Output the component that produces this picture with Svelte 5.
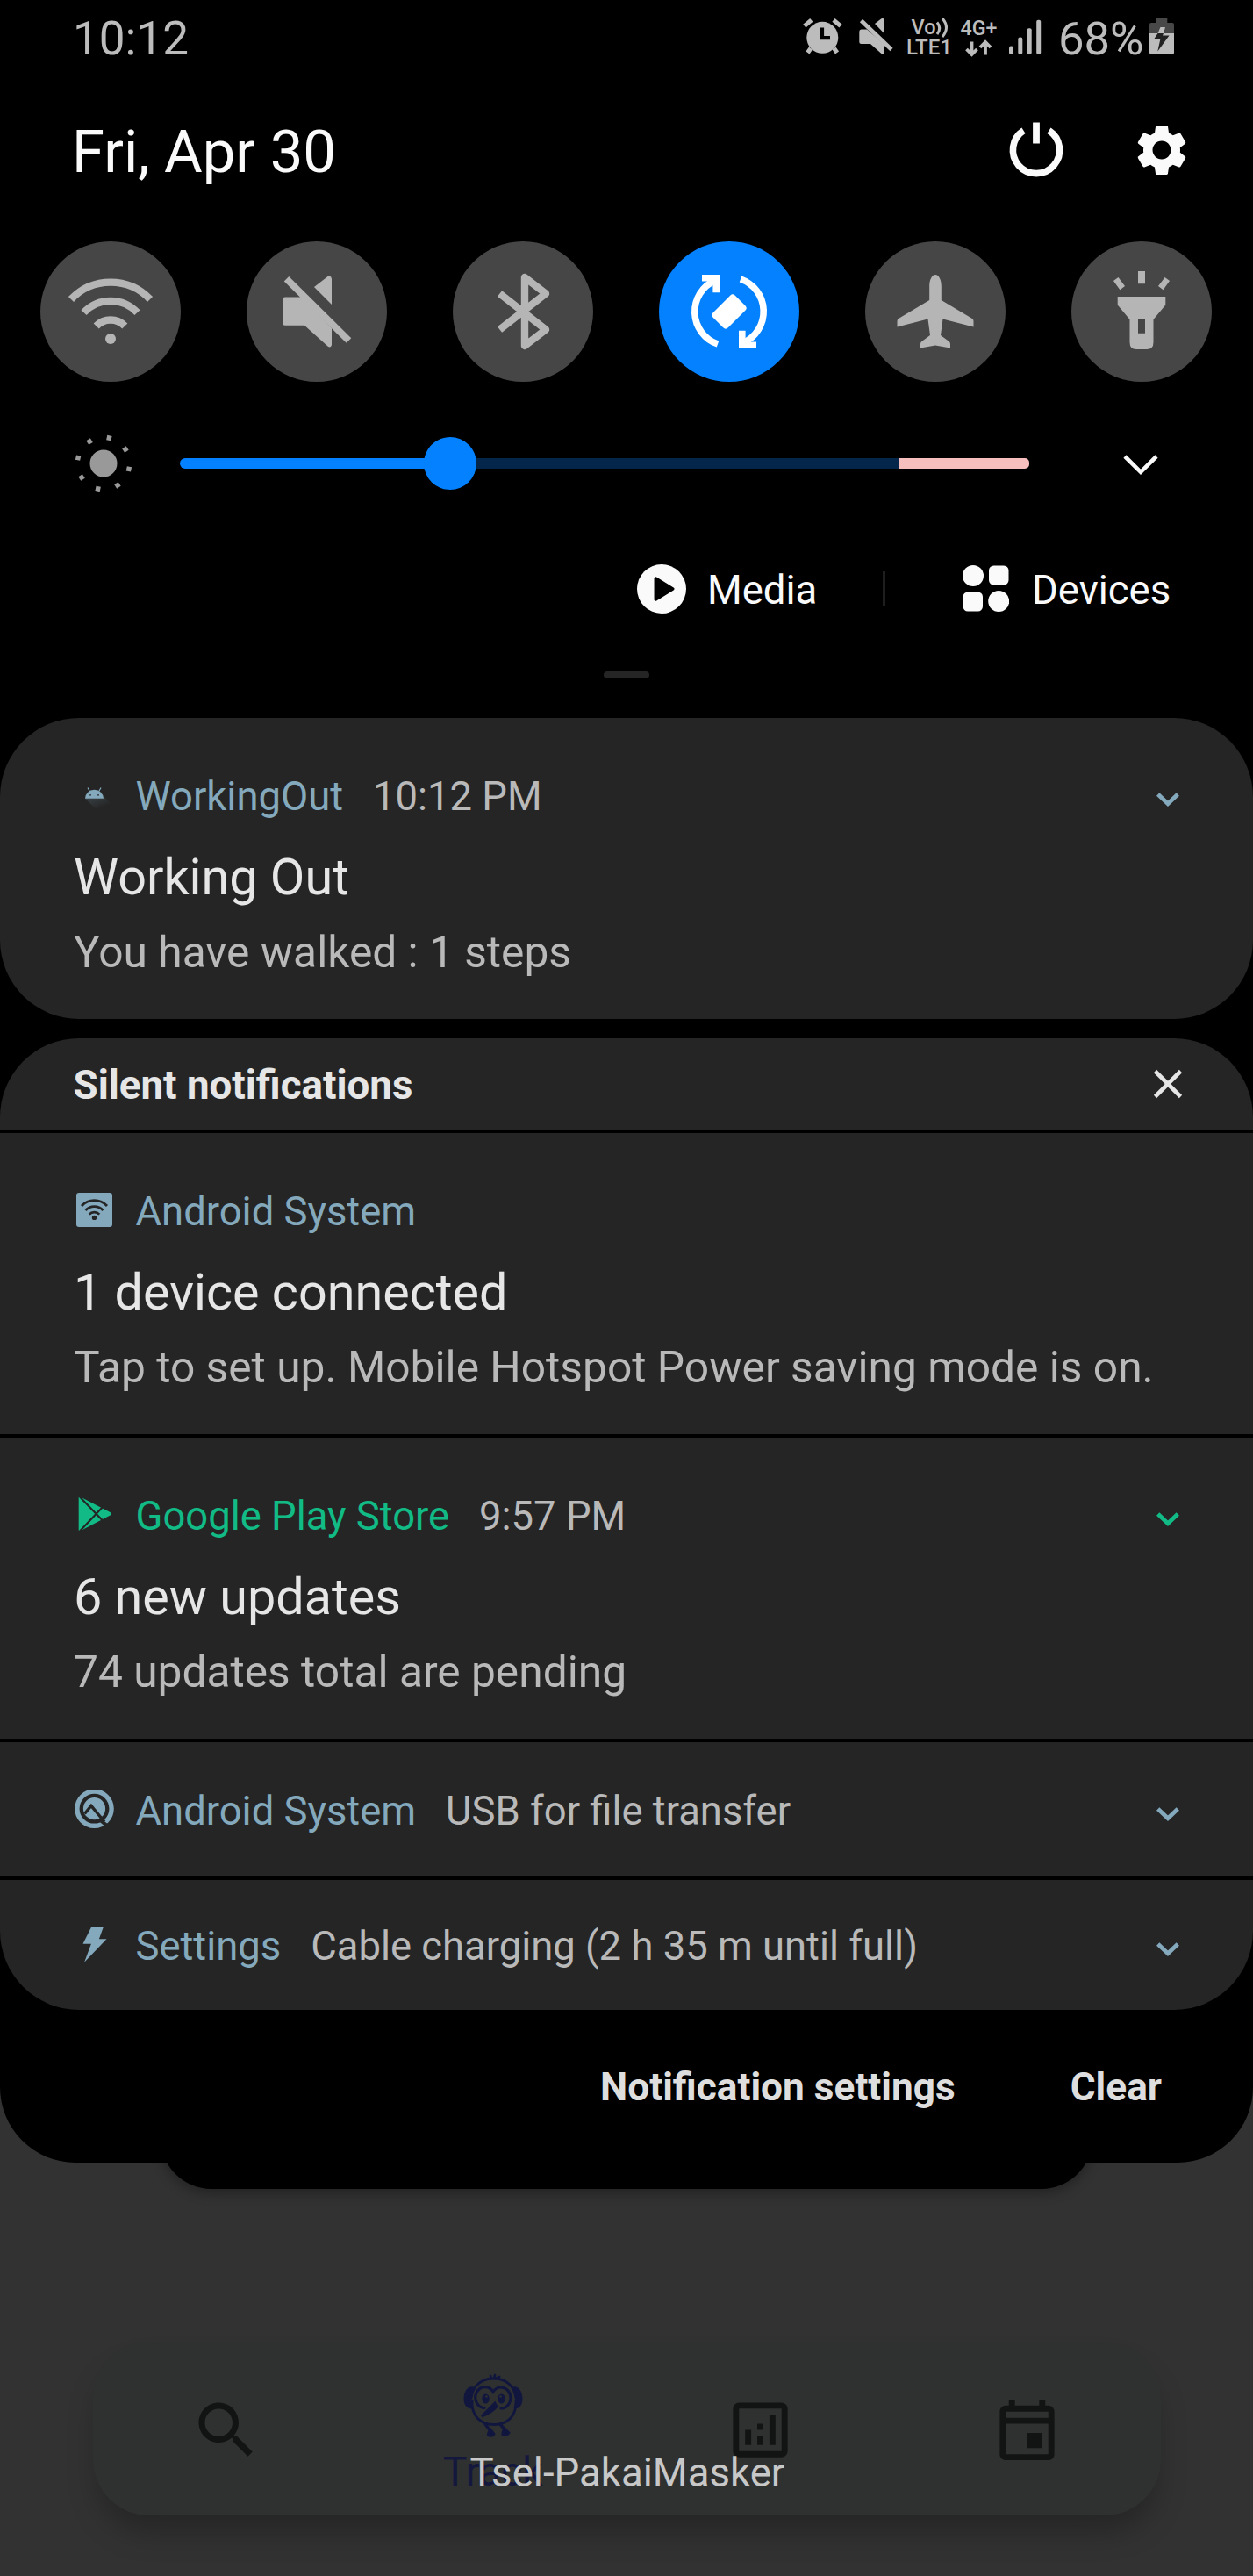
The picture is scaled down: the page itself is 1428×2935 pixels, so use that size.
<script>
  const cards = [
    { app: 'Android System', icon: 'hotspot', title: '1 device connected', body: 'Tap to set up. Mobile Hotspot Power saving mode is on.' },
    { app: 'Google Play Store', icon: 'play', time: '9:57 PM', title: '6 new updates', body: '74 updates total are pending', green: true, expand: true }
  ];
  const tiles = ['wifi', 'mute', 'bluetooth', 'rotate', 'plane', 'torch'];
  const dots = [12.4, 57.4, 102.4, 147.4, 192.4, 237.4, 282.4, 327.4];
</script>

{#snippet chevron()}
  <svg class="chev" width="32" height="32" viewBox="-16 -16 32 32"><path d="M-11.3 -3L0 7.8L11.3 -3" fill="none" stroke="currentColor" stroke-width="4.8" /></svg>
{/snippet}

{#snippet appIcon(name)}
  <svg class="app-icon" width="48" height="48" viewBox="-23.5 -24 48 48">
    {#if name === 'android'}
      <defs>
        <linearGradient id="fade" x1="0" y1="0" x2="0.6" y2="1">
          <stop offset="0" stop-color="#84a9bc" stop-opacity=".25" />
          <stop offset="0.8" stop-color="#84a9bc" stop-opacity="0" />
        </linearGradient>
      </defs>
      <path d="M-10.5 1.8L10.5 -1L18 7V18H6Z" fill="url(#fade)" />
      <path d="M-10.5 1.8A10.5 10 0 0 1 10.5 1.8Z" fill="currentColor" />
      <path d="M-7.5 -10.5L-5 -6M7.5 -10.5L5 -6" stroke="currentColor" stroke-width="1.2" />
      <circle cx="-4.5" cy="-2.2" r="0.9" fill="#252525" /><circle cx="4.5" cy="-2.2" r="0.9" fill="#252525" />
    {:else if name === 'hotspot'}
      <rect x="-20.5" y="-22" width="41" height="39" rx="3" fill="currentColor" />
      <g fill="none" stroke="#252525" stroke-width="2.8">
        <path d="M-14.5 -7A19.5 19.5 0 0 1 14.5 -7" /><path d="M-10 -2A13.5 13.5 0 0 1 10 -2" /><path d="M-5.8 2.6A8 8 0 0 1 5.8 2.6" />
      </g>
      <circle cx="0" cy="6.4" r="2.7" fill="#252525" />
    {:else if name === 'play'}
      <path d="M-17.8 -21.5Q-17.8 -23.2 -15.5 -22.3L18 -5Q21 -3.2 18 -1.5L-15.5 16Q-17.8 17 -17.8 15Z" fill="currentColor" />
      <path d="M-17 -23L10.5 5.5M-17 17L10.5 -12" stroke="#252525" stroke-width="2.2" />
    {:else if name === 'usb'}
      <circle cx="0" cy="-3.3" r="19.6" fill="none" stroke="currentColor" stroke-width="5.4" />
      <circle cx="0" cy="-3.3" r="12.6" fill="currentColor" />
      <path d="M-11 2.5L-3.6 -6.5L11.5 11.5" fill="none" stroke="#252525" stroke-width="3.4" />
      <path d="M7 10L15.5 17" stroke="#252525" stroke-width="4.2" />
    {:else}
      <path d="M-3.6 -22H10.2L5.4 -8.7H14L-11.4 17.8L-3.6 -3.3H-13Z" fill="currentColor" />
    {/if}
  </svg>
{/snippet}

<div class="screen">
  <main class="panel">
    <header class="status">
      <span class="clock">10:12</span>
      <svg class="status-icons" width="290" height="88" viewBox="910 0 290 88">
        <g fill="#bcbcbc" stroke="none">
          <circle cx="937.3" cy="42.8" r="18" />
          <path d="M924 55L920.5 60M950.5 55L954 60" stroke="#bcbcbc" stroke-width="5" />
          <path d="M916.8 29.6L924.8 22.8M958 29.6L950 22.8" stroke="#bcbcbc" stroke-width="5" />
          <path d="M937 31.5V43.2H946" fill="none" stroke="#000" stroke-width="4.2" />
          <path d="M981.5 33.5H988L1007 50V61Q1006.5 62.5 1005 61.5L992 50H981.5Q979.3 50 979.3 48V36Q979.3 33.5 981.5 33.5Z" />
          <path d="M1007 37.5L997 27L1004.5 21.3Q1007 20 1007 22Z" />
          <path d="M981.5 23.5L1016 56.5" stroke="#bcbcbc" stroke-width="4.6" />
          <text class="net" x="1038.500" y="38.500" font-size="23" textLength="28" lengthAdjust="spacingAndGlyphs">Vo</text>
          <path d="M1068 25.500Q1073.500 32 1068 39M1074 21Q1083 31.500 1074 42" fill="none" stroke="#bcbcbc" stroke-width="3" />
          <text class="net" x="1033" y="62" font-size="24.500" textLength="52" lengthAdjust="spacingAndGlyphs">LTE1</text>
          <text class="net" x="1094.500" y="40" font-size="24" textLength="42" lengthAdjust="spacingAndGlyphs">4G+</text>
          <path d="M1107.500 47.500V61M1101.500 56L1107.500 62L1113.500 56M1123 62.500V49M1117 54L1123 48L1129 54" fill="none" stroke="#bcbcbc" stroke-width="3.800" />
          <rect x="1150" y="52.500" width="5" height="9.500" rx="2" /><rect x="1160.300" y="42.500" width="5" height="19.500" rx="2" />
          <rect x="1170.700" y="32.300" width="5" height="29.700" rx="2" /><rect x="1181.200" y="22.700" width="5" height="39.300" rx="2" />
        </g>
      </svg>
      <span class="percent">68%</span>
      <svg class="battery" width="30" height="88" viewBox="1309 0 30 88">
        <path d="M1317.300 20H1330.300V26H1336Q1338 26 1338 28V38H1310V28Q1310 26 1312 26H1317.300Z" fill="#484848" />
        <path d="M1310 38H1338V60Q1338 62 1336 62H1312Q1310 62 1310 60Z" fill="#bcbcbc" />
        <path d="M1322.500 31H1328L1326 38H1319.500Z" fill="#bcbcbc" />
        <path d="M1319.500 38H1326L1325 40.500H1332.500L1319.300 58.500L1322.500 44H1315.500Z" fill="#222" />
      </svg>
    </header>

    <div class="date-row">
      <span class="date">Fri, Apr 30</span>
      <svg class="power" width="72" height="72" viewBox="-36 -36 72 72"><path d="M-14.500 -22.300A26.600 26.600 0 1 0 14.500 -22.300" fill="none" stroke="#fafafa" stroke-width="7.600" /><path d="M0 -31.500V-7.500" stroke="#fafafa" stroke-width="7.800" /></svg>
      <svg width="70" height="70" viewBox="0 0 24 24" fill="#fafafa"><path d="M19.140 12.940c.04-.3.06-.61.06-.94 0-.32-.02-.64-.07-.94l2.030-1.580c.18-.14.23-.41.12-.61l-1.920-3.320c-.12-.22-.37-.29-.59-.22l-2.390.96c-.5-.38-1.030-.7-1.620-.94l-.36-2.540c-.04-.24-.24-.41-.48-.41h-3.840c-.24 0-.43.17-.47.41l-.36 2.540c-.59.24-1.130.57-1.620.94l-2.390-.96c-.22-.08-.47 0-.59.22L2.740 8.870c-.12.21-.08.47.12.61l2.030 1.580c-.05.3-.09.63-.09.94s.02.64.07.94l-2.030 1.580c-.18.14-.23.41-.12.61l1.920 3.320c.12.22.37.29.59.22l2.390-.96c.5.38 1.030.7 1.620.94l.36 2.540c.05.24.24.41.48.41h3.840c.24 0 .44-.17.47-.41l.36-2.540c.59-.24 1.130-.56 1.620-.94l2.390.96c.22.08.47 0 .59-.22l1.920-3.320c.12-.22.07-.47-.12-.61l-2.010-1.580zM12 15.600c-1.980 0-3.600-1.620-3.600-3.600s1.620-3.600 3.600-3.600 3.600 1.620 3.600 3.600-1.620 3.600-3.600 3.600z" /></svg>
    </div>

    <div class="tiles">
      {#each tiles as tile}
        <div class="tile" class:active={tile === 'rotate'}>
          <svg width="100" height="100" viewBox="-50 -50 100 100" fill="#b5b5b5" stroke="none">
            {#if tile === 'wifi'}
              <g fill="none" stroke="#b5b5b5" stroke-width="8.400">
                <path d="M-45 -14A62 62 0 0 1 45 -14" /><path d="M-30.500 1.200A41.500 41.500 0 0 1 30.500 1.200" /><path d="M-16.300 16.500A22.500 22.500 0 0 1 16.300 16.500" />
              </g>
              <circle cx="0" cy="31" r="6" />
            {:else if tile === 'mute'}
              <path d="M-36 -16.500H-17L17 19V38Q16 42 12.500 39.500L-14 15.700H-36Q-39 15.700 -39 12.500V-13.500Q-39 -16.500 -36 -16.500Z" />
              <path d="M17 -8L-3 -28L12.500 -40Q16.500 -41.500 17 -37Z" />
              <path d="M-34.500 -37.300L36.500 33" stroke="#b5b5b5" stroke-width="7.800" />
            {:else if tile === 'bluetooth'}
              <path d="M-26.500 -20.500L26 20.500L2 39V-39L26 -20.500L-26.500 20.500" fill="none" stroke="#b5b5b5" stroke-width="8.400" stroke-linejoin="round" />
            {:else if tile === 'rotate'}
              <g fill="none" stroke="#fff" stroke-width="7.600">
                <path d="M-13 37A39 39 0 0 1 -16 -35.500" /><path d="M-31 -38.200H-14.800V-21.700" />
                <path d="M13 -37A39 39 0 0 1 16 35.500" /><path d="M31 38.200H14.800V21.700" />
              </g>
              <path d="M4 -15.500L15.500 -4L-4 15.500L-15.500 4Z" fill="#fff" stroke="#fff" stroke-width="8" stroke-linejoin="round" />
            {:else if tile === 'plane'}
              <path d="M0 -42C4 -42 6.800 -36 6.800 -29V-13L42 8Q43.500 9 43.500 11V17.500L8.500 8.500L6 27L15.500 34Q17 35 17 37V41.500L0 38.500L-17 41.500V37Q-17 35 -15.500 34L-6 27L-8.500 8.500L-43.500 17.500V11Q-43.500 9 -42 8L-6.800 -13V-29C-6.800 -36 -4 -42 0 -42Z" />
            {:else}
              <path fill-rule="evenodd" d="M-27.300 -17H27.300V-7.500L13.500 9V35Q13.500 43 6 43H-6Q-13.500 43 -13.500 35V9L-27.300 -7.500ZM-4 8.300V24.700H4V8.300Z" />
              <path d="M-4 -46H4V-31.700H-4ZM-32 -35L-26.500 -39L-19 -29L-24.600 -24.700ZM32 -35L26.500 -39L19 -29L24.600 -24.700Z" />
            {/if}
          </svg>
        </div>
      {/each}
    </div>

    <div class="brightness">
      <svg width="72" height="72" viewBox="-36 -36 72 72" fill="#999">
        <circle r="15.500" />
        {#each dots as a}<rect x="-2.700" y="-32.300" width="5.400" height="5.400" transform="rotate({a})" />{/each}
      </svg>
      <div class="track"><div class="fill"></div><div class="rest"></div><div class="hot"></div><div class="thumb"></div></div>
      <svg width="48" height="48" viewBox="-24 -24 48 48"><path d="M-18 -8L0 9.800L18 -8" fill="none" stroke="#fafafa" stroke-width="4.600" /></svg>
    </div>

    <div class="shortcuts">
      <div class="media">
        <svg width="56" height="56" viewBox="-28 -28 56 56"><circle r="28" fill="#fafafa" /><path d="M-6.700 -12L12.700 0L-6.700 12Z" stroke="#000" stroke-width="3.500" stroke-linejoin="round" /></svg>
        <span>Media</span>
      </div>
      <div class="bar"></div>
      <div class="devices">
        <svg width="53" height="53" viewBox="0 0 53 53" fill="#fafafa"><circle cx="12" cy="12" r="12" /><rect x="30" y=".5" width="22.500" height="22" rx="5.500" /><rect x=".5" y="30.500" width="22.500" height="22" rx="5.500" /><circle cx="41.200" cy="41" r="12" /></svg>
        <span>Devices</span>
      </div>
    </div>
    <div class="handle"></div>

    <section class="card">
      <article class="notif">
        <div class="head">{@render appIcon('android')}<span class="app">WorkingOut</span><span class="meta">10:12 PM</span>{@render chevron()}</div>
        <h2>Working Out</h2>
        <p>You have walked : 1 steps</p>
      </article>
    </section>

    <section class="card group">
      <div class="silent">
        <b>Silent notifications</b>
        <svg width="40" height="40" viewBox="-20 -20 40 40"><path d="M-14.500 -14.500L14.500 14.500M14.500 -14.500L-14.500 14.500" stroke="#e6e6e6" stroke-width="4.600" /></svg>
      </div>
      {#each cards as c}
        <article class="notif" class:green={c.green}>
          <div class="head">{@render appIcon(c.icon)}<span class="app">{c.app}</span>{#if c.time}<span class="meta">{c.time}</span>{/if}{#if c.expand}{@render chevron()}{/if}</div>
          <h2>{c.title}</h2>
          <p>{c.body}</p>
        </article>
      {/each}
      <article class="line usb"><div class="head">{@render appIcon('usb')}<span class="app">Android System</span><span class="meta">USB for file transfer</span>{@render chevron()}</div></article>
      <article class="line cable"><div class="head">{@render appIcon('bolt')}<span class="app">Settings</span><span class="meta">Cable charging (2 h 35 m until full)</span>{@render chevron()}</div></article>
    </section>

    <footer><b>Notification settings</b><b>Clear</b></footer>
  </main>

  <div class="under"></div>

  <nav>
    <div class="tab"><svg width="84" height="84" viewBox="0 0 24 24" fill="#121413"><path d="M15.500 14h-.79l-.28-.27C15.410 12.590 16 11.110 16 9.500 16 5.910 13.090 3 9.500 3S3 5.910 3 9.500 5.910 16 9.500 16c1.610 0 3.090-.59 4.230-1.570l.27.28v.79l5 4.990L20.490 19l-4.990-5zm-6 0C7.010 14 5 11.990 5 9.500S7.010 5 9.500 5 14 7.010 14 9.500 11.990 14 9.500 14z" /></svg></div>
    <div class="tab track-tab">
      <svg width="72" height="76" viewBox="-36 -38 72 76" fill="none" stroke="#11163f" stroke-width="2.800" stroke-linecap="round">
        <path d="M-25 -9C-23 -24 -12 -31 0.500 -31C13 -31 24 -24 26 -9" />
        <path d="M-24 -6C-25 12 -14 21.500 1 21.500C16 21.500 27 12 26 -6" />
        <path d="M-23 -21C-30 -23 -33 -14 -33 -8C-33 -1 -30 3 -24 3C-27 -5 -26 -14 -23 -21ZM23 -21C30 -23 33 -14 33 -8C33 -1 30 3 24 3C27 -5 26 -14 23 -21Z" fill="#11163f" stroke-width="1" />
        <path d="M-10 2.500A11 12 0 1 1 0 -16A11 12 0 1 1 9 3" stroke-width="3.200" />
        <ellipse cx="-8.500" cy="-8" rx="4.200" ry="5.500" fill="#11163f" stroke="none" /><ellipse cx="9.500" cy="-8" rx="4.200" ry="5.500" fill="#11163f" stroke="none" />
        <circle cx="-7.500" cy="-10.500" r="1.300" fill="#2f3130" stroke="none" /><circle cx="8.500" cy="-10.500" r="1.300" fill="#2f3130" stroke="none" />
        <path d="M2 -3L-13 12Q-2 8 4 1Z" fill="#11163f" />
        <path d="M-2 -31L-3 -34M1 -31L2 -35M3 -31L7 -33" />
        <path d="M-9 21L-3 29M8 21L14 28" stroke-width="3.500" />
        <path d="M-3 27L1 32Q0 35 -5 34Q-7 33 -3 27ZM13 26L18 31Q16 34 11 33Q10 31 13 26Z" fill="#11163f" />
      </svg>
      <span>Track</span>
    </div>
    <div class="tab"><svg width="83" height="83" viewBox="0 0 24 24" fill="#121413"><path fill-rule="evenodd" d="M5 3H19C20.100 3 21 3.900 21 5V19C21 20.100 20.100 21 19 21H5C3.900 21 3 20.100 3 19V5C3 3.900 3.900 3 5 3ZM5 5V19H19V5ZM7 12H9V17H7ZM11 10H13V12H11ZM11 14H13V17H11ZM15 7H17V17H15Z" /></svg></div>
    <div class="tab"><svg width="83" height="83" viewBox="0 0 24 24" fill="#121413"><path d="M19 4h-1V2h-2v2H8V2H6v2H5c-1.110 0-1.990.9-1.990 2L3 20c0 1.100.89 2 2 2h14c1.100 0 2-.9 2-2V6c0-1.100-.9-2-2-2zm0 16H5V10h14v10zm0-12H5V6h14v2zm-7 5h5v5h-5v-5z" /></svg></div>
    <div class="carrier">Tsel-PakaiMasker</div>
  </nav>
</div>

<style>
  :global(body) { margin: 0; background: #323232; }
  svg { display: block; flex: none; }
  .screen { width: 1428px; height: 2935px; overflow: hidden; background: #323232; font-family: Roboto, "Liberation Sans", sans-serif; }
  .panel { position: relative; z-index: 1; box-sizing: border-box; height: 2464px; background: #000; border-radius: 0 0 86px 86px; }
  span, b, h2, p { white-space: nowrap; }

  .status { display: flex; align-items: center; height: 88px; padding: 0 89px 0 83px; color: #bcbcbc; font-size: 53px; line-height: 88px; }
  .status-icons { margin-left: auto; }
  .net { font-family: Roboto, sans-serif; font-weight: 500; }
  .percent { width: 103px; margin-left: 6px; font-size: 52.500px; }

  .date-row { display: flex; align-items: center; height: 166px; padding: 0 69.500px 0 82px; }
  .date { margin: 4px auto 0 0; font-size: 67px; line-height: 80px; color: #fafafa; }
  .power { margin-right: 71.500px; }

  .tiles { display: flex; justify-content: space-between; height: 160px; padding: 20.500px 47px 0 45.500px; }
  .tile { display: flex; align-items: center; justify-content: center; width: 160px; height: 160px; border-radius: 50%; background: #464646; }
  .tile.active { background: #0381fe; }

  .brightness { display: flex; align-items: center; height: 187px; padding-left: 82.400px; }
  .track { position: relative; display: flex; width: 968px; height: 12px; margin: 0 102.500px 0 51px; border-radius: 6px; }
  .fill { width: 308px; background: #0381fe; border-radius: 6px 0 0 6px; }
  .rest { width: 512px; background: #04264a; }
  .hot { flex: 1; background: #f6bfbd; border-radius: 0 5px 5px 0; }
  .thumb { position: absolute; left: 278px; top: -24px; width: 60px; height: 60px; border-radius: 50%; background: #0381fe; }

  .shortcuts { display: flex; align-items: center; height: 98px; padding-left: 725.500px; color: #fafafa; font-size: 45.500px; line-height: 60px; }
  .shortcuts span { margin-top: 5px; }
  .media { display: flex; align-items: center; gap: 24.500px; width: 280px; }
  .bar { width: 3px; height: 39px; background: #1e1e1e; }
  .devices { display: flex; align-items: center; gap: 26px; padding-left: 88.500px; }
  .handle { width: 52px; height: 8px; margin: 45px auto 45.500px; border-radius: 4px; background: #252525; }

  .card { overflow: hidden; border-radius: 90px; background: #252525; }
  .group { display: flex; flex-direction: column; gap: 4px; margin-top: 22px; background: #000; }
  .group > * { background: #252525; }
  .silent { display: flex; align-items: center; justify-content: space-between; box-sizing: border-box; height: 104px; padding: 0 77px 0 83.500px; color: #e6e6e6; font-size: 45.700px; line-height: 60px; }
  .silent b { margin-top: 4px; }
  .notif { box-sizing: border-box; height: 343px; padding: 59.500px 81px 0 84px; color: #84a9bc; }
  .notif.green { color: #12bb86; }
  .head { display: flex; align-items: center; height: 60px; font-size: 45.400px; line-height: 60px; }
  .app { margin-left: 22.500px; }
  .meta { margin-left: 34px; color: #b9b9b9; }
  .chev { margin-left: auto; }
  h2 { margin: 26px 0 0; font-size: 57.500px; font-weight: 400; line-height: 72px; color: #e6e6e6; }
  p { margin: 19px 0 0; font-size: 49.700px; line-height: 60px; color: #b9b9b9; }
  .line { box-sizing: border-box; padding: 49px 81px 0 84px; color: #84a9bc; }
  .usb { height: 153px; }
  .cable { height: 148px; padding-top: 46px; }

  footer { display: flex; align-items: center; justify-content: flex-end; gap: 131px; height: 174px; padding: 2px 104px 0 0; box-sizing: border-box; color: #dedede; font-size: 44.200px; line-height: 60px; }

  .under { width: 1062px; height: 94px; margin: -64px auto 0; border-radius: 0 0 58px 58px; background: #000; box-shadow: 0 5px 14px rgba(0, 0, 0, .3); }

  nav { position: relative; display: grid; grid-template-columns: repeat(4, 1fr); width: 1217px; height: 198px; margin: 174px auto 0; border-radius: 64px; background: #2f3130; box-shadow: 0 24px 34px -6px rgba(0, 0, 0, .26); }
  .tab { display: flex; justify-content: center; align-items: center; padding-top: 3px; }
  .track-tab { flex-direction: column; justify-content: flex-start; padding-top: 35px; }
  .track-tab span { margin-top: 7px; font-size: 46.500px; line-height: 60px; color: #15183d; }
  .carrier { position: absolute; left: 430px; top: 120px; font-size: 45.600px; line-height: 60px; color: #c8c8c8; white-space: nowrap; }
</style>
